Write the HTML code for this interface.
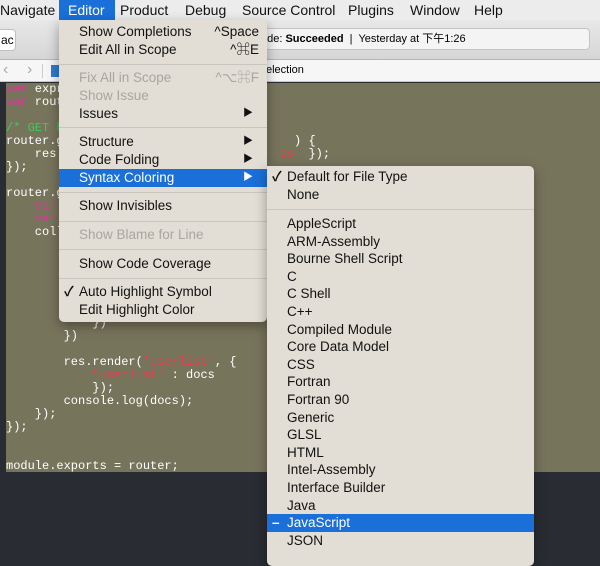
<!DOCTYPE html>
<html><head><meta charset="utf-8"><style>
*{margin:0;padding:0;box-sizing:border-box}
body{width:600px;height:552px;overflow:hidden;position:relative;background:#292c33;font-family:"Liberation Sans","Noto Sans CJK SC",sans-serif}
.a{position:absolute}
#menubar{left:0;top:0;width:600px;height:20px;background:#ececec;font-size:14px;color:#111}
#menubar span{position:absolute;top:2px}
#tool{left:0;top:20px;width:600px;height:40px;background:linear-gradient(#e8e8e8,#d6d6d6);border-bottom:1px solid #b8b8b8}
#jump{left:0;top:60px;width:600px;height:22px;background:#f6f6f6;border-bottom:1px solid #c8c8c8;font-size:11px}
#editor{left:6px;top:83px;width:594px;height:389px;background:#77745c}
pre{position:absolute;font-family:"Liberation Mono",monospace;font-size:12px;line-height:13px;color:#fff}
.k{color:#e0359c}.c{color:#34d058}.s{color:#f0394e}
.menu{position:absolute;background:#e2ded5;border-radius:5px;box-shadow:0 4px 12px rgba(0,0,0,.35);font-size:13.5px;color:#111}
.it{position:absolute;left:0;right:0;height:18px;line-height:18px;padding-left:20px}
.dis{color:#a8a6a0}
.sel{background:#1a6fd8;color:#fff}
.sep{position:absolute;left:0;right:0;height:1px;background:#c9c6bf}
.sc{position:absolute;right:8px;top:0}
.ar{position:absolute;right:14px;top:0;font-size:10px}
.ck{position:absolute;left:5px;font-weight:bold}
</style></head><body>
<div id="menubar" class="a">
<span style="left:0">Navigate</span>
<span style="left:59px;top:0;width:56px;height:20px;background:#1a6fd8"></span>
<span style="left:68px;color:#fff">Editor</span>
<span style="left:120px">Product</span>
<span style="left:185px">Debug</span>
<span style="left:242px">Source Control</span>
<span style="left:348px">Plugins</span>
<span style="left:410px">Window</span>
<span style="left:474px">Help</span>
</div>
<div id="tool" class="a">
<div class="a" style="left:-6px;top:9px;width:22px;height:22px;background:#fff;border:1px solid #c0c0c0;border-radius:4px;font-size:12px;line-height:20px;padding-left:6px">ac</div>
<div class="a" style="left:240px;top:8px;width:350px;height:22px;background:#f4f4f4;border:1px solid #c4c4c4;border-radius:4px;font-size:11px;line-height:20px;padding-left:20px">ode: <b>Succeeded</b> &nbsp;|&nbsp; Yesterday at 下午1:26</div>
</div>
<div id="jump" class="a">
<span class="a" style="left:3px;top:1px;font-size:16px;color:#aaa">&lsaquo;</span>
<span class="a" style="left:27px;top:1px;font-size:16px;color:#aaa">&rsaquo;</span>
<span class="a" style="left:42px;top:4px;width:1px;height:14px;background:#ccc"></span>
<span class="a" style="left:51px;top:5px;width:10px;height:12px;background:#2f7bd0"></span>
<span class="a" style="left:266px;top:4px">election</span>
</div>
<div id="editor" class="a"></div>
<pre style="left:6px;top:83px;width:594px"><span class="k">var</span> expr
<span class="k">var</span> rout

<span class="c">/* GET h</span>
router.g                                ) {
    res.                              <span class="s">ss'</span> });
});

router.g
    <span class="k">var</span>
    <span class="k">var</span>
    coll






            })
        })

        res.render(<span class="s">'userlist'</span>, {
            <span class="s">"userlist"</span> : docs
            });
        console.log(docs);
    });
});


module.exports = router;</pre>

<div class="menu" style="left:59px;top:20px;width:208px;height:302px;border-top-left-radius:0;border-top-right-radius:0">
<div class="it" style="top:3px">Show Completions<span class="sc">^Space</span></div>
<div class="it" style="top:21px">Edit All in Scope<span class="sc">^⌘E</span></div>
<div class="sep" style="top:44px"></div>
<div class="it dis" style="top:49px">Fix All in Scope<span class="sc">^⌥⌘F</span></div>
<div class="it dis" style="top:67px">Show Issue</div>
<div class="it" style="top:85px">Issues<span class="ar">▶</span></div>
<div class="sep" style="top:107px"></div>
<div class="it" style="top:113px">Structure<span class="ar">▶</span></div>
<div class="it" style="top:131px">Code Folding<span class="ar">▶</span></div>
<div class="it sel" style="top:149px">Syntax Coloring<span class="ar">▶</span></div>
<div class="sep" style="top:172px"></div>
<div class="it" style="top:177px">Show Invisibles</div>
<div class="sep" style="top:201px"></div>
<div class="it dis" style="top:206px">Show Blame for Line</div>
<div class="sep" style="top:229px"></div>
<div class="it" style="top:235px">Show Code Coverage</div>
<div class="sep" style="top:258px"></div>
<div class="it" style="top:263px"><span class="ck">✓</span>Auto Highlight Symbol</div>
<div class="it" style="top:281px">Edit Highlight Color</div>
</div>

<div class="menu" style="left:267px;top:166px;width:267px;height:400px;border-top-left-radius:0">
<div class="it" style="top:2px"><span class="ck">✓</span>Default for File Type</div>
<div class="it" style="top:20px">None</div>
<div class="sep" style="top:43px"></div>
<div class="it" style="top:49px">AppleScript</div>
<div class="it" style="top:66.6px">ARM-Assembly</div>
<div class="it" style="top:84.2px">Bourne Shell Script</div>
<div class="it" style="top:101.8px">C</div>
<div class="it" style="top:119.4px">C Shell</div>
<div class="it" style="top:137px">C++</div>
<div class="it" style="top:154.6px">Compiled Module</div>
<div class="it" style="top:172.2px">Core Data Model</div>
<div class="it" style="top:189.8px">CSS</div>
<div class="it" style="top:207.4px">Fortran</div>
<div class="it" style="top:225px">Fortran 90</div>
<div class="it" style="top:242.6px">Generic</div>
<div class="it" style="top:260.2px">GLSL</div>
<div class="it" style="top:277.8px">HTML</div>
<div class="it" style="top:295.4px">Intel-Assembly</div>
<div class="it" style="top:313px">Interface Builder</div>
<div class="it" style="top:330.6px">Java</div>
<div class="it sel" style="top:348.2px"><span class="ck">–</span>JavaScript</div>
<div class="it" style="top:366px">JSON</div>
</div>
</body></html>
